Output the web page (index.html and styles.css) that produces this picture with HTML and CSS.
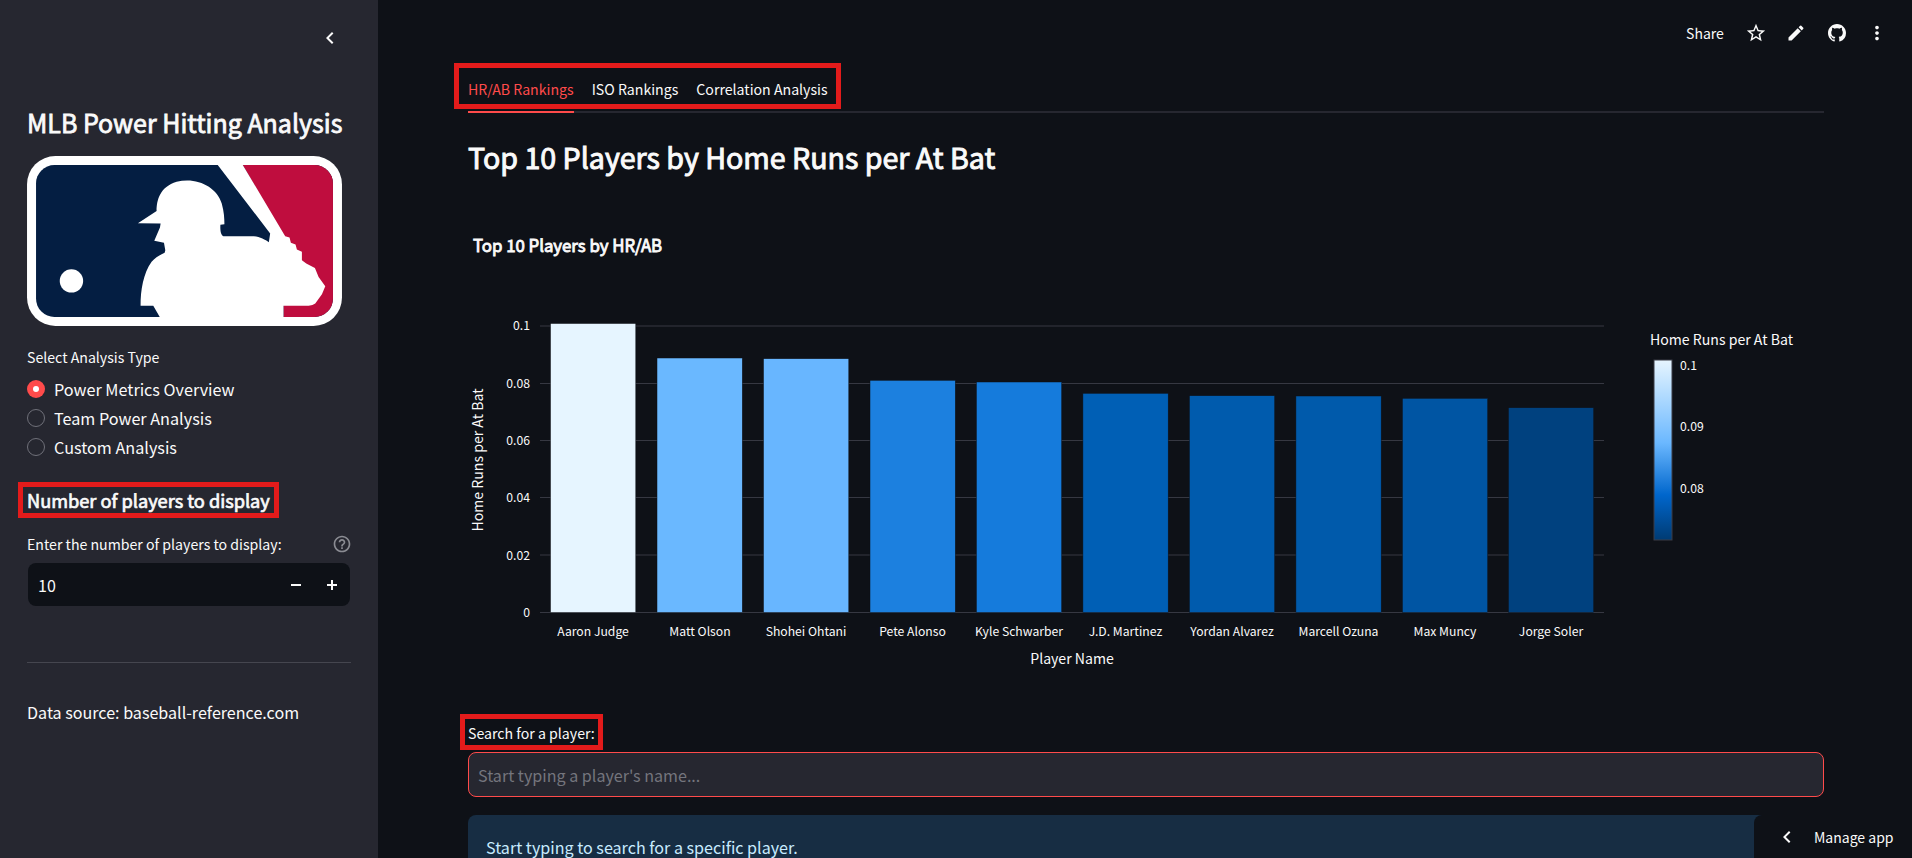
FILE: index.html
```html
<!DOCTYPE html>
<html lang="en">
<head>
<meta charset="utf-8">
<title>MLB Power Hitting Analysis</title>
<link rel="stylesheet" href="styles.css">
</head>
<body>
<div class="app">
  <aside class="sidebar">
    <div class="collapse">
      <svg class="icon-chevron" viewBox="0 0 24 24"><path d="M15.41 7.41 14 6l-6 6 6 6 1.41-1.41L10.83 12z"/></svg>
    </div>
    <h1 class="side-title">MLB Power Hitting Analysis</h1>
    <svg class="logo" viewBox="22 18 943 509">
      <rect x="22" y="18" width="943" height="509" rx="85" fill="#fff"/>
      <rect x="49" y="45" width="889" height="455" rx="55" fill="#041e42"/>
      <path d="M668 45H883A55 55 0 0 1 938 100V445A55 55 0 0 1 883 500H790V300L780 240Z" fill="#bf0d3e"/>
      <path d="M593 45L668 45L795 258L808 262L812 278L826 283L830 298L845 305L845 330L858 340L884 353L895 380L915 408L905 432L885 460Q878 466 865 466L790 466L790 510L425 510L400 466L362 466C362 420 370 370 395 335C405 322 420 315 434 308L436 300L432 278L403 272L420 232L422 220L354 219L410 183C410 150 420 110 470 95C530 80 590 110 605 160C612 185 613 205 613 222L601 224C600 240 602 255 610 258L695 258C715 258 735 268 746 276L750 250Z" fill="#fff"/>
      <circle cx="155" cy="392" r="35" fill="#fff"/>
    </svg>
    <div class="field-label first">Select Analysis Type</div>
    <div class="radios">
      <div class="radio"><span class="dot on"></span><span>Power Metrics Overview</span></div>
      <div class="radio"><span class="dot"></span><span>Team Power Analysis</span></div>
      <div class="radio"><span class="dot"></span><span>Custom Analysis</span></div>
    </div>
    <h3 class="side-head annot">Number of players to display</h3>
    <div class="num-label">
      <span>Enter the number of players to display:</span>
      <svg class="icon-help" viewBox="0 0 24 24"><path d="M11 18h2v-2h-2v2zm1-16C6.48 2 2 6.48 2 12s4.48 10 10 10 10-4.48 10-10S17.52 2 12 2zm0 18c-4.41 0-8-3.59-8-8s3.59-8 8-8 8 3.59 8 8-3.59 8-8 8zm0-14c-2.21 0-4 1.79-4 4h2c0-1.1.9-2 2-2s2 .9 2 2c0 2-3 1.75-3 5h2c0-2.25 3-2.5 3-5 0-2.21-1.79-4-4-4z"/></svg>
    </div>
    <div class="num-input">
      <span class="num-value">10</span>
      <span class="step minus"></span>
      <span class="step plus"></span>
    </div>
    <hr class="side-rule">
    <p class="source">Data source: baseball-reference.com</p>
  </aside>

  <main class="main">
    <header class="topbar">
      <span class="share">Share</span>
      <span class="tool"><svg width="22" height="22" viewBox="0 0 24 24"><path d="M22 9.24l-7.19-.62L12 2 9.19 8.63 2 9.24l5.46 4.73L5.82 21 12 17.27 18.18 21l-1.63-7.03L22 9.24zM12 15.4l-3.76 2.27 1-4.28-3.32-2.88 4.38-.38L12 6.1l1.71 4.04 4.38.38-3.32 2.88 1 4.28L12 15.4z"/></svg></span>
      <span class="tool"><svg width="20" height="20" viewBox="0 0 24 24"><path d="M3 17.25V21h3.75L17.81 9.94l-3.75-3.75L3 17.25zM20.71 7.04a1 1 0 0 0 0-1.41l-2.34-2.34a1 1 0 0 0-1.41 0l-1.83 1.83 3.75 3.75 1.83-1.83z"/></svg></span>
      <span class="tool"><svg width="18" height="18" viewBox="0 0 16 16"><path d="M8 0C3.58 0 0 3.58 0 8c0 3.54 2.29 6.53 5.47 7.59.4.07.55-.17.55-.38 0-.19-.01-.82-.01-1.49-2.01.37-2.53-.49-2.69-.94-.09-.23-.48-.94-.82-1.13-.28-.15-.68-.52-.01-.53.63-.01 1.08.58 1.23.82.72 1.21 1.87.87 2.33.66.07-.52.28-.87.51-1.07-1.78-.2-3.64-.89-3.64-3.95 0-.87.31-1.59.82-2.15-.08-.2-.36-1.02.08-2.12 0 0 .67-.21 2.2.82.64-.18 1.32-.27 2-.27.68 0 1.36.09 2 .27 1.53-1.04 2.2-.82 2.2-.82.44 1.1.16 1.92.08 2.12.51.56.82 1.27.82 2.15 0 3.07-1.87 3.75-3.65 3.95.29.25.54.73.54 1.48 0 1.07-.01 1.93-.01 2.2 0 .21.15.46.55.38A8.013 8.013 0 0 0 16 8c0-4.42-3.58-8-8-8z"/></svg></span>
      <span class="tool"><svg width="22" height="22" viewBox="0 0 24 24"><path d="M12 8c1.1 0 2-.9 2-2s-.9-2-2-2-2 .9-2 2 .9 2 2 2zm0 2c-1.1 0-2 .9-2 2s.9 2 2 2 2-.9 2-2-.9-2-2-2zm0 6c-1.1 0-2 .9-2 2s.9 2 2 2 2-.9 2-2-.9-2-2-2z"/></svg></span>
    </header>

    <div class="content">
      <nav class="tabs">
        <div class="tab-list annot">
          <span class="tab active">HR/AB Rankings</span>
          <span class="tab">ISO Rankings</span>
          <span class="tab">Correlation Analysis</span>
        </div>
      </nav>
      <h2 class="page-title">Top 10 Players by Home Runs per At Bat</h2>

      <svg class="chart" viewBox="468 200 1356 500">
        <defs>
          <linearGradient id="scale" x1="0" y1="0" x2="0" y2="1">
            <stop offset="0" stop-color="#e6f5ff"/>
            <stop offset="0.46" stop-color="#6bb8ff"/>
            <stop offset="0.75" stop-color="#0066cc"/>
            <stop offset="1" stop-color="#003b73"/>
          </linearGradient>
        </defs>
        <text class="c-title" x="473" y="252">Top 10 Players by HR/AB</text>

        <g class="grid">
          <line x1="540" x2="1604" y1="326" y2="326"/>
          <line x1="540" x2="1604" y1="383.5" y2="383.5"/>
          <line x1="540" x2="1604" y1="440.5" y2="440.5"/>
          <line x1="540" x2="1604" y1="497.5" y2="497.5"/>
          <line x1="540" x2="1604" y1="555" y2="555"/>
          <line x1="540" x2="1604" y1="612.5" y2="612.5"/>
        </g>

        <g class="bars">
          <rect x="550.5" y="323.5" width="85.3" height="289" fill="#e6f5ff"/>
          <rect x="657" y="358" width="85.3" height="254.5" fill="#6ab8ff"/>
          <rect x="763.5" y="358.7" width="85.3" height="253.8" fill="#68b6ff"/>
          <rect x="870" y="380.3" width="85.3" height="232.2" fill="#1c80df"/>
          <rect x="976.4" y="382" width="85.3" height="230.5" fill="#157bdc"/>
          <rect x="1082.9" y="393.3" width="85.3" height="219.2" fill="#005fb5"/>
          <rect x="1189.4" y="395.7" width="85.3" height="216.8" fill="#005bad"/>
          <rect x="1295.9" y="396" width="85.3" height="216.5" fill="#005aab"/>
          <rect x="1402.4" y="398.3" width="85.3" height="214.2" fill="#0055a3"/>
          <rect x="1508.4" y="407.7" width="85.3" height="204.8" fill="#00417f"/>
        </g>

        <g class="ticks y-ticks">
          <text x="530" y="330">0.1</text>
          <text x="530" y="388">0.08</text>
          <text x="530" y="445">0.06</text>
          <text x="530" y="502">0.04</text>
          <text x="530" y="560">0.02</text>
          <text x="530" y="617">0</text>
        </g>
        <g class="ticks x-ticks">
          <text x="593" y="636">Aaron Judge</text>
          <text x="700" y="636">Matt Olson</text>
          <text x="806" y="636">Shohei Ohtani</text>
          <text x="912.5" y="636">Pete Alonso</text>
          <text x="1019" y="636">Kyle Schwarber</text>
          <text x="1125.5" y="636">J.D. Martinez</text>
          <text x="1232" y="636">Yordan Alvarez</text>
          <text x="1338.5" y="636">Marcell Ozuna</text>
          <text x="1445" y="636">Max Muncy</text>
          <text x="1551" y="636">Jorge Soler</text>
        </g>
        <text class="axis-title" x="1072" y="664" text-anchor="middle">Player Name</text>
        <text class="axis-title" transform="translate(483 460) rotate(-90)" text-anchor="middle">Home Runs per At Bat</text>

        <text class="axis-title" x="1650" y="345">Home Runs per At Bat</text>
        <rect class="cbar" x="1654" y="360" width="18" height="180" fill="url(#scale)"/>
        <g class="ticks">
          <text x="1680" y="370">0.1</text>
          <text x="1680" y="431">0.09</text>
          <text x="1680" y="493">0.08</text>
        </g>
      </svg>

      <label class="search-label annot">Search for a player:</label>
      <input class="search" type="text" placeholder="Start typing a player's name...">
      <div class="info">Start typing to search for a specific player.</div>
    </div>

    <div class="manage">
      <svg class="icon-chevron" viewBox="0 0 24 24"><path d="M15.41 7.41 14 6l-6 6 6 6 1.41-1.41L10.83 12z"/></svg>
      <span>Manage app</span>
    </div>
  </main>
</div>
</body>
</html>
```

FILE: styles.css
```css
* { box-sizing: border-box; }
html, body { margin: 0; padding: 0; height: 100%; overflow: hidden; }
body {
  background: #0e1117;
  color: #fafafa;
  font-family: "Noto Sans CJK SC", "Noto Sans", sans-serif;
  font-size: 16px;
}
.app { display: flex; width: 1912px; height: 858px; overflow: hidden; }

/* annotation boxes drawn on top of the screenshot */
.annot { position: relative; width: fit-content; }
.annot::after {
  content: "";
  position: absolute;
  border: 5px solid #e31b1b;
  pointer-events: none;
}

/* sidebar */
.sidebar { flex: 0 0 378px; min-width: 0; background: #262730; padding: 0 27px; }
.collapse { height: 76px; display: flex; align-items: center; justify-content: flex-end; padding-right: 9px; }
.icon-chevron { width: 24px; height: 24px; fill: #fafafa; display: block; }
.side-title { margin: 26px 0 14px; font-size: 25px; line-height: 40px; font-weight: 400; -webkit-text-stroke: .8px #fafafa; white-space: nowrap; }
.logo { display: block; width: 315px; height: 170px; }
.field-label { font-size: 14.15px; line-height: 20px; }
.field-label.first { margin-top: 21px; }
.radios { margin-top: 8px; }
.radio { height: 28.7px; display: flex; align-items: center; gap: 9px; font-size: 16.2px; }
.dot { width: 18px; height: 18px; border-radius: 50%; border: 1px solid #6f7079; background: transparent; flex: none; }
.dot.on { border: 0; background: #ff4b4b; display: flex; align-items: center; justify-content: center; }
.dot.on::before { content: ""; width: 6px; height: 6px; border-radius: 50%; background: #fff; }
.side-head { margin: 24px 0 0; font-size: 18.2px; line-height: 30px; font-weight: 400; -webkit-text-stroke: .7px #fafafa; white-space: nowrap; }
.side-head::after { left: -9px; right: -9px; top: -3px; bottom: -3px; }
.num-label { margin-top: 19px; height: 20px; display: flex; align-items: center; justify-content: space-between; font-size: 14.15px; }
.icon-help { width: 20px; height: 20px; fill: #8a8b92; margin-right: -1px; }
.num-input { margin: 9px 1px 0; height: 43px; background: #0e1117; border-radius: 8px; display: flex; align-items: center; padding-left: 10px; }
.num-value { flex: 1; font-size: 16px; }
.step { position: relative; width: 36px; height: 100%; }
.step::before { content: ""; position: absolute; left: 13px; top: 21px; width: 10px; height: 2px; background: #fafafa; }
.step.plus::after { content: ""; position: absolute; left: 17px; top: 17px; width: 2px; height: 10px; background: #fafafa; }
.side-rule { margin: 56px 0 0; border: 0; height: 1px; background: #45464f; }
.source { margin: 37px 0 0; font-size: 16.1px; line-height: 24px; }

/* main */
.main { flex: 1; position: relative; min-width: 0; }
.topbar { height: 66px; display: flex; align-items: center; justify-content: flex-end; padding-right: 15px; }
.share { font-size: 14px; margin-right: 12px; }
.tool { width: 40.3px; display: flex; justify-content: center; }
.tool svg { fill: #fafafa; display: block; }
.content { padding: 0 88px 0 90px; }

.tabs { padding-top: 11px; border-bottom: 2px solid #262730; }
.tab-list { display: flex; gap: 18px; }
.tab-list::after { left: -14px; right: -13px; top: -14px; bottom: 2px; }
.tab { font-size: 14.15px; line-height: 24px; padding-bottom: 10px; margin-bottom: -2px; border-bottom: 2px solid transparent; white-space: nowrap; }
.tab.active { color: #ff4b4b; border-bottom-color: #ff4b4b; }

.page-title { margin: 20px 0 0; font-size: 28.6px; line-height: 48px; font-weight: 400; -webkit-text-stroke: .95px #fafafa; white-space: nowrap; }

.chart { display: block; margin-top: 19px; width: 1356px; height: 500px; font-family: "Noto Sans CJK SC", "Noto Sans", sans-serif; }
.c-title { font-size: 16.8px; font-weight: 400; fill: #fafafa; stroke: #fafafa; stroke-width: .85px; }
.grid line { stroke: #363842; stroke-width: 1; }
.bars rect { stroke: #0e1117; stroke-width: .5; }
.ticks text { font-size: 12.2px; fill: #fafafa; }
.y-ticks text { text-anchor: end; }
.x-ticks text { text-anchor: middle; }
.axis-title { font-size: 14.1px; fill: #fafafa; }
.cbar { stroke: #3a3c46; stroke-width: 1; }

.search-label { display: block; margin-top: 23px; font-size: 14.15px; line-height: 20px; }
.search-label::after { left: -8px; right: -8px; top: -9px; bottom: -7px; }
.search {
  display: block;
  width: 100%;
  height: 45px;
  margin-top: 9px;
  padding: 0 9px;
  background: #262730;
  border: 1px solid #ff4b4b;
  border-radius: 8px;
  color: #fafafa;
  font: inherit;
  font-size: 16.1px;
  outline: 0;
}
.search::placeholder { color: #74757d; opacity: 1; }
.info { margin-top: 18px; height: 80px; padding: 20px 18px; background: #172d43; border-radius: 8px; color: #c7ebff; font-size: 16.1px; line-height: 24px; }

.manage {
  position: absolute;
  right: 0;
  bottom: 0;
  width: 158px;
  height: 43px;
  display: flex;
  align-items: center;
  gap: 15px;
  padding-left: 21px;
  background: #0e1117;
  border-top-left-radius: 8px;
  font-size: 14px;
}
```
